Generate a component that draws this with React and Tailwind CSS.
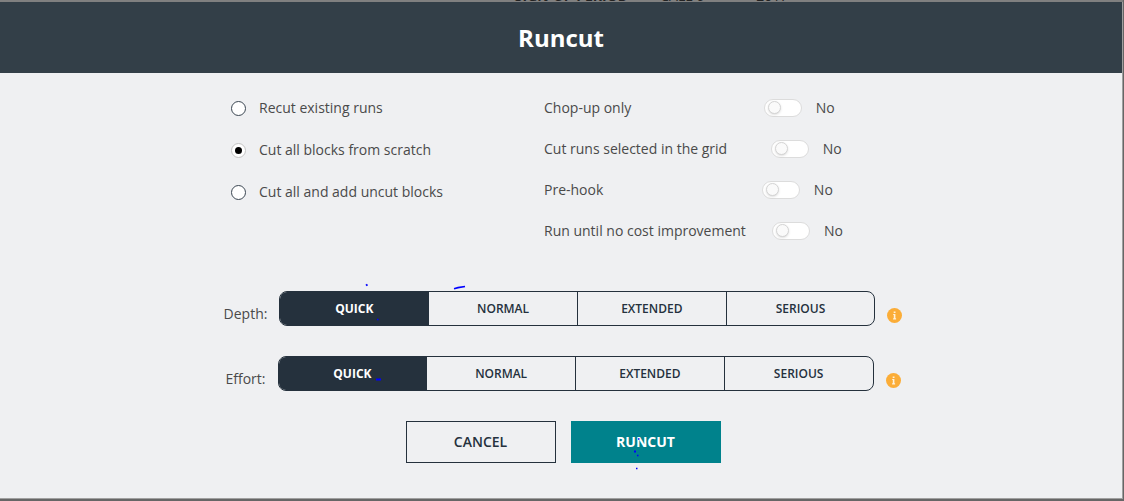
import { useState } from 'react';

const CUT_MODES = ['Recut existing runs', 'Cut all blocks from scratch', 'Cut all and add uncut blocks'];
const OPTIONS = ['Chop-up only', 'Cut runs selected in the grid', 'Pre-hook', 'Run until no cost improvement'];
const LEVELS = ['QUICK', 'NORMAL', 'EXTENDED', 'SERIOUS'];

function InfoIcon() {
  return (
    <svg viewBox="0 0 15 15" className="size-[15px]" aria-hidden="true">
      <circle cx="7.5" cy="7.5" r="7.5" fill="#fbad38" />
      <path d="M6.7 3.4h1.8v1.5H6.7zM6.2 6h2.2v4.2h.7v1.2H6.1v-1.2h.7V7.1h-.6z" fill="#fff2dc" />
    </svg>
  );
}

function Toggle({ label }) {
  const [on, setOn] = useState(false);

  return (
    <label className="flex h-[41px] items-center">
      <span className="grow-[13] whitespace-nowrap">{label}</span>
      <input
        type="checkbox"
        role="switch"
        checked={on}
        onChange={(e) => setOn(e.target.checked)}
        className="peer sr-only"
      />
      <span className="flex h-[18px] w-[38px] items-center rounded-full border border-[#dcdcdc] bg-white pl-[3px] peer-checked:justify-end peer-checked:bg-[#00828c] peer-checked:pr-[3px]">
        <span className="size-[13px] rounded-full border border-[#d4d4d4] bg-[#fafafa] shadow-sm" />
      </span>
      <span className="grow pl-[14px]">{on ? 'Yes' : 'No'}</span>
    </label>
  );
}

function LevelPicker({ label }) {
  const [level, setLevel] = useState('QUICK');

  return (
    <div role="group" aria-label={label} className="flex items-end justify-center">
      <span className="pr-3 leading-6">{label}:</span>
      <div className="flex h-[35px] w-full max-w-[596px] overflow-hidden rounded-lg border border-[#25313d]">
        {LEVELS.map((name) => (
          <button
            key={name}
            type="button"
            aria-pressed={level === name}
            onClick={() => setLevel(name)}
            className={`flex-1 border-l border-[#25313d] text-xs first:border-l-0 ${
              level === name ? 'bg-[#25313d] font-bold text-white' : 'font-semibold text-[#25313d]'
            }`}
          >
            {name}
          </button>
        ))}
      </div>
      <button type="button" aria-label={`About ${label}`} className="flex h-[22px] items-center pl-3">
        <InfoIcon />
      </button>
    </div>
  );
}

// stray pen marks left over the dialog
function PenMarks() {
  return (
    <svg
      className="pointer-events-none absolute top-0 left-1/2 h-[501px] w-[400px] -translate-x-1/2"
      viewBox="362 0 400 501"
      stroke="#00f"
      fill="#00f"
      aria-hidden="true"
    >
      <path d="M454 288.700L458 287.700L465 286.500" fill="none" strokeWidth="1.700" />
      <path d="M366 285.500L367.500 284.500" strokeWidth="2" />
      <path d="M376 379.500H381" strokeWidth="2" />
      <path d="M377 319.500h1.500M638 439h1.500M636 468.500h1.500M637 455.500h1.500" strokeWidth="1.500" />
      <path d="M634 451.500h2" strokeWidth="2" />
    </svg>
  );
}

export default function App() {
  const [mode, setMode] = useState(CUT_MODES[1]);

  return (
    <div className="relative min-h-screen bg-[#666666] pr-px font-['Open_Sans','Noto_Sans',sans-serif] text-sm text-[#4a4a4a]">
      <div className="flex h-[2px] items-end justify-center gap-8 overflow-hidden bg-[#808080] pl-[180px] leading-[12px] text-[#222]">
        <b>SIGN-UP PERIOD</b>
        <span>CALL 6</span>
        <span className="pl-5">2017</span>
      </div>

      <div role="dialog" aria-labelledby="title" className="border-r border-b border-[#a0a0a0] bg-[#eff0f2]">
        <header className="flex h-[71px] items-center justify-center bg-[#333f48]">
          <h1 id="title" className="text-2xl font-bold text-white">Runcut</h1>
        </header>

        <form className="pb-[35px] pl-1" onSubmit={(e) => e.preventDefault()}>
          <div className="mx-auto flex max-w-[664px] pt-[14px]">
            <div role="radiogroup" aria-label="Cut mode" className="w-[313px]">
              {CUT_MODES.map((name) => (
                <label key={name} className="flex h-[42px] items-center gap-[13px]">
                  <input
                    type="radio"
                    name="mode"
                    checked={mode === name}
                    onChange={() => setMode(name)}
                    className="flex size-[15px] appearance-none items-center justify-center rounded-full border border-[#3b4652] bg-white checked:border-[#c4c4c4] checked:before:size-[7px] checked:before:rounded-full checked:before:bg-black checked:before:content-['']"
                  />
                  {name}
                </label>
              ))}
            </div>
            <div className="w-[301px]">
              {OPTIONS.map((name) => (
                <Toggle key={name} label={name} />
              ))}
            </div>
          </div>

          <div className="flex flex-col gap-[30px] pt-10">
            <LevelPicker label="Depth" />
            <LevelPicker label="Effort" />
          </div>

          <div className="flex justify-center gap-[15px] pt-[30px]">
            <button type="button" className="h-[42px] w-[150px] border border-[#25313d] font-semibold text-[#25313d]">
              CANCEL
            </button>
            <button type="submit" className="h-[42px] w-[150px] bg-[#00828c] font-bold text-white">
              RUNCUT
            </button>
          </div>
        </form>
      </div>

      <PenMarks />
    </div>
  );
}
